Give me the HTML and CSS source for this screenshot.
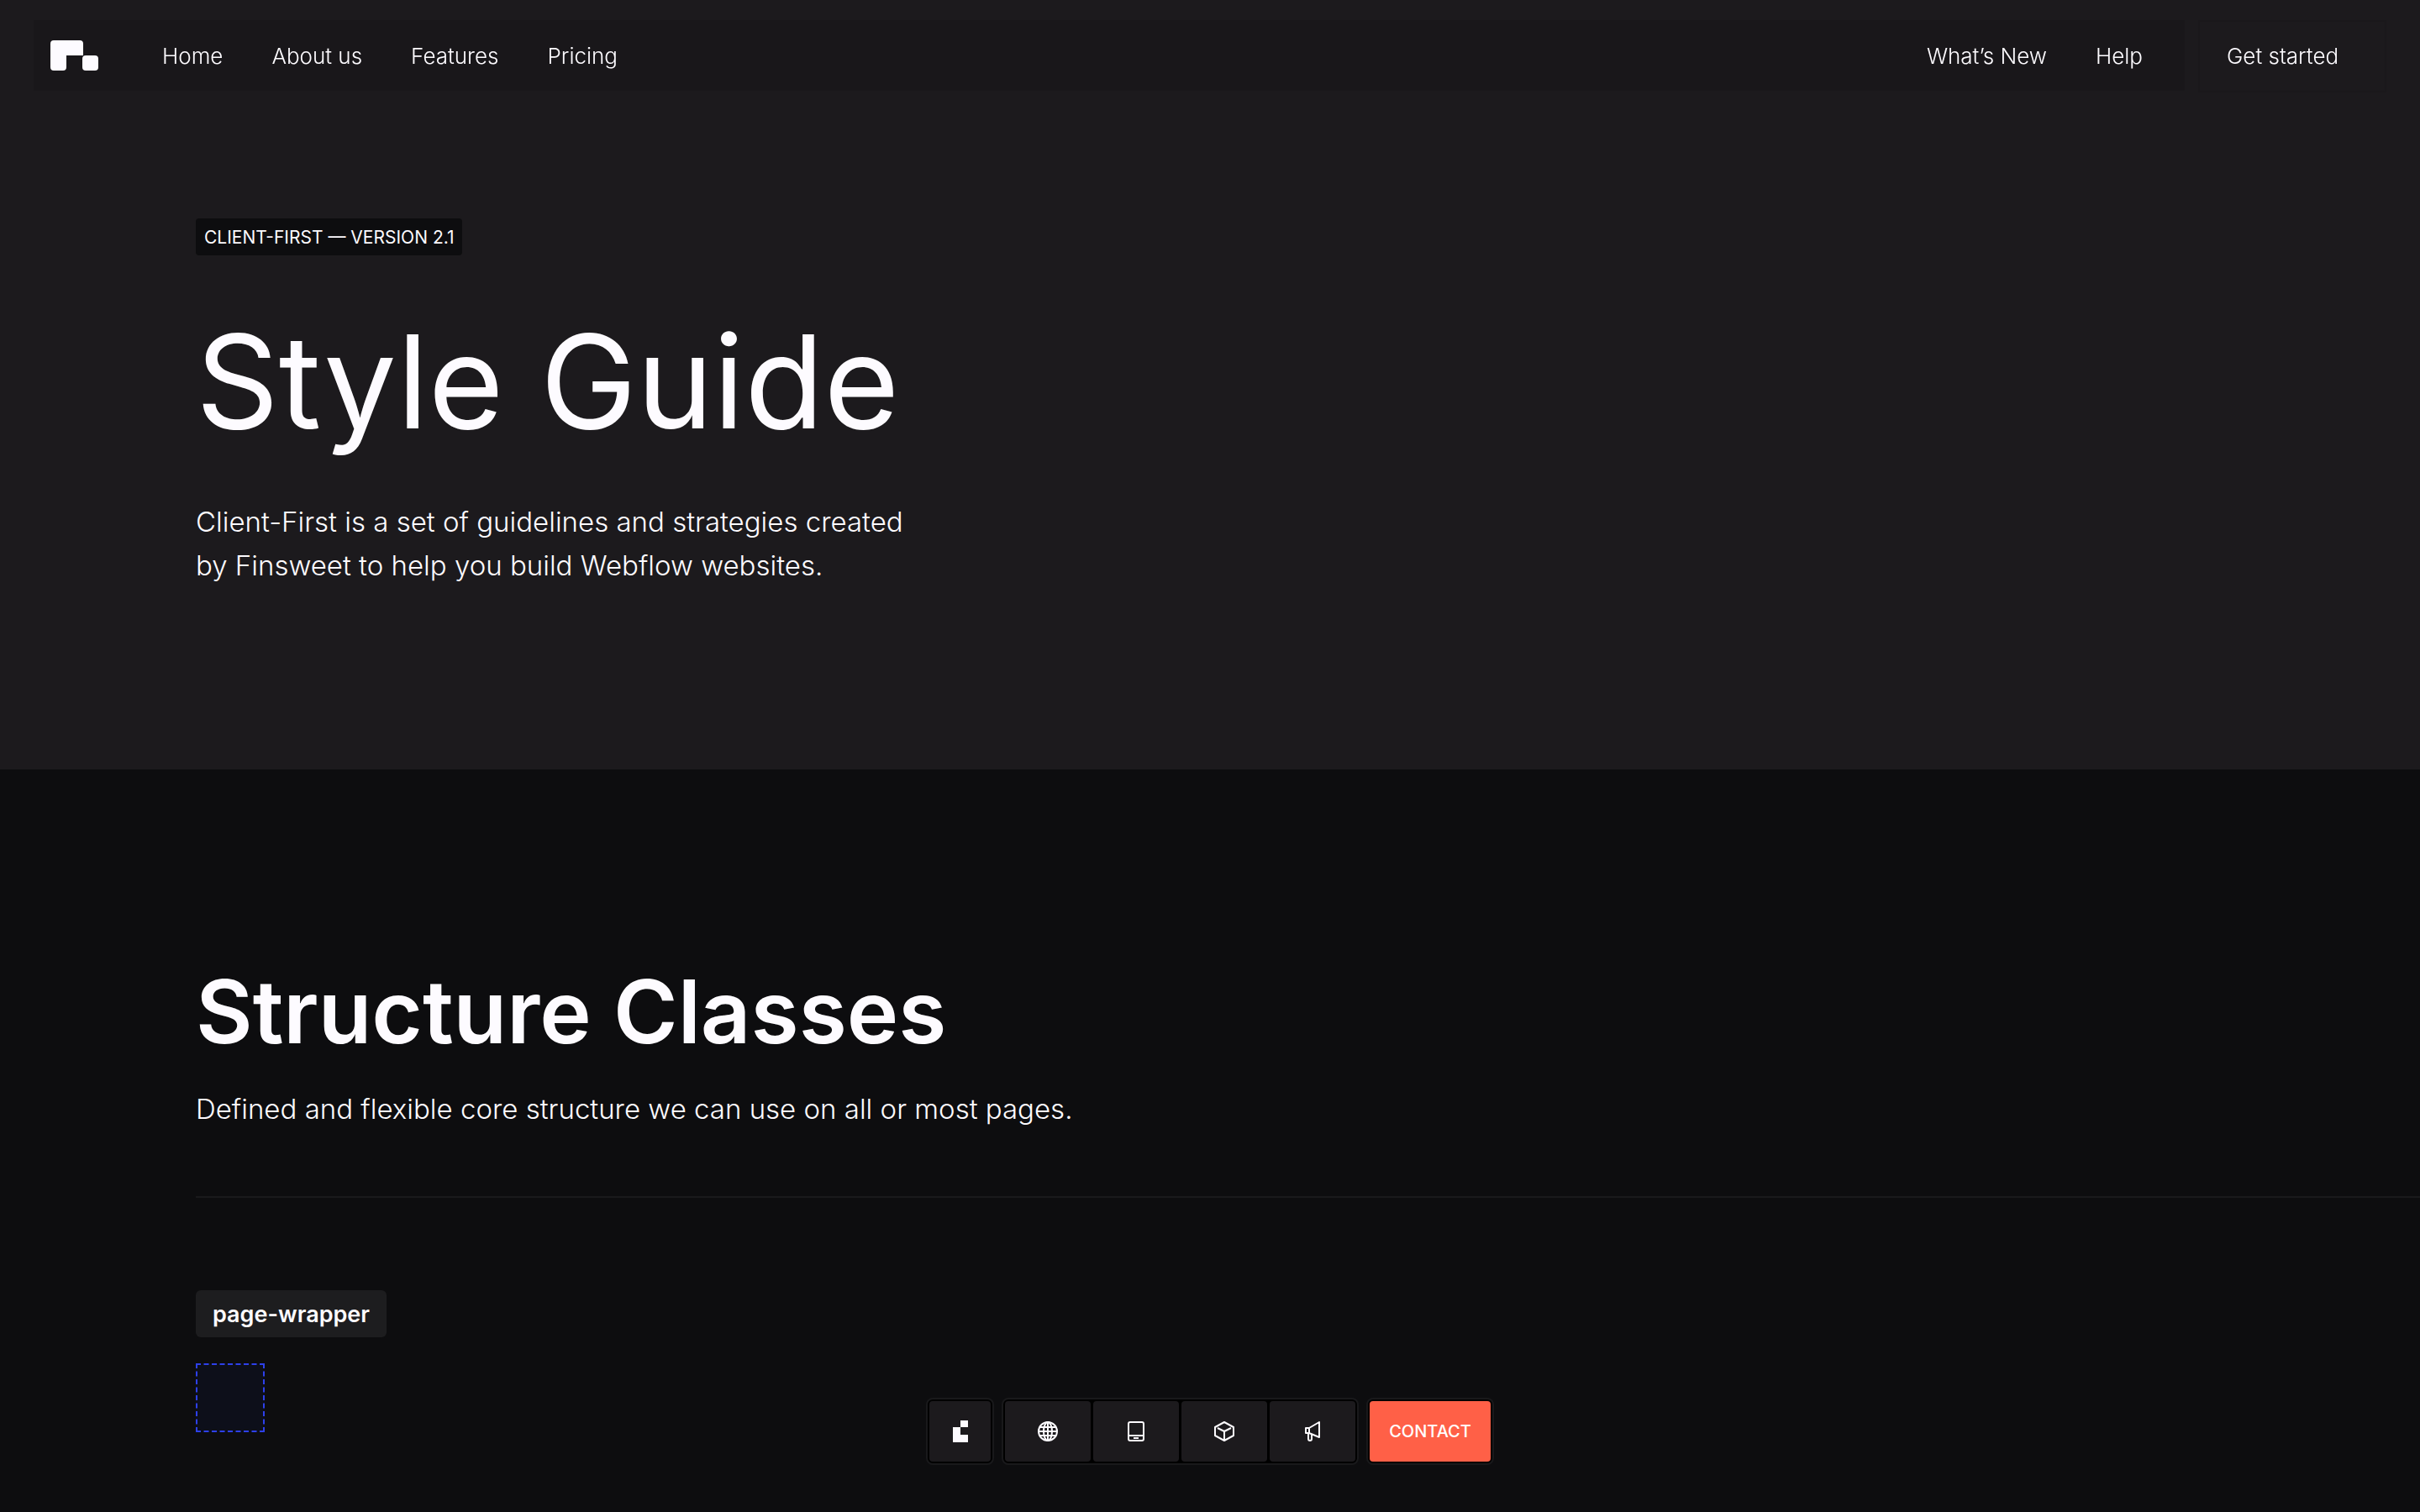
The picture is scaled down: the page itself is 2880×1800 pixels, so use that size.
FILE: index.html
```html
<!DOCTYPE html>
<html lang="en">
<head>
  <meta charset="UTF-8" />
  <meta name="viewport" content="width=device-width, initial-scale=1.0"/>
  <title>Style Guide</title>
  <link rel="stylesheet" href="styles.css">
</head>
<body>

  <header class="header">
    <div class="navbar">
      <a href="#" class="nav-logo" aria-label="Home page">
        <svg width="58" height="36" viewBox="0 0 58 36" fill="#fdfbff">
          <path d="M4 0h31a4 4 0 0 1 4 4v14H19v14a4 4 0 0 1-4 4H4a4 4 0 0 1-4-4V4a4 4 0 0 1 4-4z"/>
          <rect x="38" y="18" width="19" height="18" rx="4"/>
        </svg>
      </a>
      <nav class="nav-links">
        <a href="#">Home</a>
        <a href="#">About us</a>
        <a href="#">Features</a>
        <a href="#">Pricing</a>
      </nav>
      <nav class="nav-links nav-right">
        <a href="#">What’s New</a>
        <a href="#">Help</a>
      </nav>
    </div>
    <a href="#" class="get-started">Get started</a>
  </header>

  <main>
    <!-- Intro -->
    <section class="hero">
      <div class="tag">CLIENT-FIRST — VERSION 2.1</div>
      <h1>Style Guide</h1>
      <p>Client-First is a set of guidelines and strategies created<br>by Finsweet to help you build Webflow websites.</p>
    </section>

    <!-- Structure classes -->
    <section class="structure">
      <div class="section-head">
        <h2>Structure Classes</h2>
        <p>Defined and flexible core structure we can use on all or most pages.</p>
      </div>
      <div class="class-label">page-wrapper</div>
      <div class="class-box"></div>
    </section>
  </main>

  <!-- Floating toolbar -->
  <div class="toolbar">
    <div class="tool-group">
      <button class="tool tool-logo" aria-label="Client-First">
        <svg width="18" height="26" viewBox="0 0 18 26" fill="#fdfbff">
          <path d="M9 0h9v8H9z"/>
          <path d="M0 8h9v9h9v9H0z"/>
        </svg>
      </button>
    </div>
    <div class="tool-group">
      <button class="tool" aria-label="Sites">
        <svg class="icon" viewBox="0 0 24 24">
          <circle cx="12" cy="12" r="11"/>
          <ellipse cx="12" cy="12" rx="5" ry="11"/>
          <path d="M12 1v22M1 12h22M3 7h18M3 17h18"/>
        </svg>
      </button>
      <button class="tool" aria-label="Devices">
        <svg class="icon" viewBox="0 0 24 24">
          <rect x="3" y="1" width="18" height="22" rx="2"/>
          <path d="M3 17h18M9 20h6"/>
        </svg>
      </button>
      <button class="tool" aria-label="Components">
        <svg class="icon" viewBox="0 0 24 24">
          <path d="M12 1l11 6v10l-11 6-11-6V7z"/>
          <path d="M4 8l8 4 8-4M12 12v11"/>
        </svg>
      </button>
      <button class="tool" aria-label="News">
        <svg class="icon" viewBox="0 0 24 24">
          <path d="M4 8h4l12-7v18L8 14H4zM8 8v6M7 14v7a2 2 0 0 0 4 0v-6"/>
        </svg>
      </button>
    </div>
    <div class="tool-group">
      <button class="contact">CONTACT</button>
    </div>
  </div>

</body>
</html>
```

FILE: styles.css
```css
/* General Styles */
* {
  box-sizing: border-box;
}

body {
  margin: 0;
  font-family: Inter, "Liberation Sans", sans-serif;
  font-weight: 300;
  background-color: #0d0d0f;
  color: #fdfbff;
  overflow: hidden;
}

a {
  color: inherit;
  text-decoration: none;
}

h1, h2, p {
  margin: 0;
}

button {
  border: none;
  padding: 0;
  font-family: inherit;
  cursor: pointer;
}

/* Header */
.header {
  position: fixed;
  top: 0;
  left: 0;
  right: 0;
  display: flex;
  gap: 16px;
  padding: 24px 40px;
  font-size: 26px;
  line-height: 84px;
}

.navbar {
  flex: 1;
  display: flex;
  align-items: center;
  height: 84px;
  padding: 0 50px 0 20px;
  background-color: #19171a;
}

.nav-logo {
  display: flex;
  margin-right: 75px;
}

.nav-links {
  display: flex;
  gap: 58px;
  padding-top: 2px;
}

.nav-right {
  margin-left: auto;
}

.get-started {
  width: 224px;
  padding-left: 32px;
  border: 2px solid #1a181b;
  line-height: 82px;
}

/* Hero */
.hero {
  padding: 260px 233px 217px;
  background-color: #1c1a1d;
}

.tag {
  width: max-content;
  padding: 2px 10px 0;
  border-radius: 4px;
  background-color: #0d0d0f;
  font-size: 21px;
  font-weight: 400;
  line-height: 42px;
}

h1 {
  margin-top: 60px;
  font-size: 154px;
  font-weight: 400;
  line-height: 180px;
}

p {
  font-size: 33px;
  line-height: 52px;
}

.hero p {
  margin-top: 51px;
}

/* Structure Classes */
.structure {
  padding: 222px 0 90px 233px;
}

.section-head {
  padding-bottom: 78px;
  border-bottom: 2px solid #19191b;
}

h2 {
  font-size: 104px;
  font-weight: 600;
  line-height: 132px;
}

.section-head p {
  margin-top: 24px;
}

.class-label {
  width: max-content;
  margin-top: 110px;
  padding: 2px 20px 0;
  border-radius: 6px;
  background-color: #1d1d1f;
  font-size: 27px;
  font-weight: 600;
  line-height: 54px;
}

.class-box {
  width: 82px;
  height: 82px;
  margin-top: 31px;
  border: 2px dashed #2d40ea;
  background-color: #0d0f1a;
}

/* Toolbar */
.toolbar {
  position: fixed;
  bottom: 56px;
  left: 0;
  right: 0;
  display: flex;
  justify-content: center;
  gap: 9px;
}

.tool-group {
  display: flex;
  gap: 3px;
  padding: 2px;
  border: 2px solid #19191b;
  border-radius: 8px;
  background-color: #000;
}

.tool {
  display: flex;
  align-items: center;
  justify-content: center;
  width: 102px;
  height: 72px;
  border-radius: 4px;
  background-color: #1c1a1d;
}

.tool-logo {
  width: 73px;
}

.icon {
  width: 24px;
  height: 24px;
  fill: none;
  stroke: #fdfbff;
  stroke-width: 2;
  stroke-linejoin: round;
}

.contact {
  width: 144px;
  height: 72px;
  border-radius: 4px;
  background-color: #ff6047;
  color: #fff;
  font-size: 20px;
  font-weight: 500;
}
```
